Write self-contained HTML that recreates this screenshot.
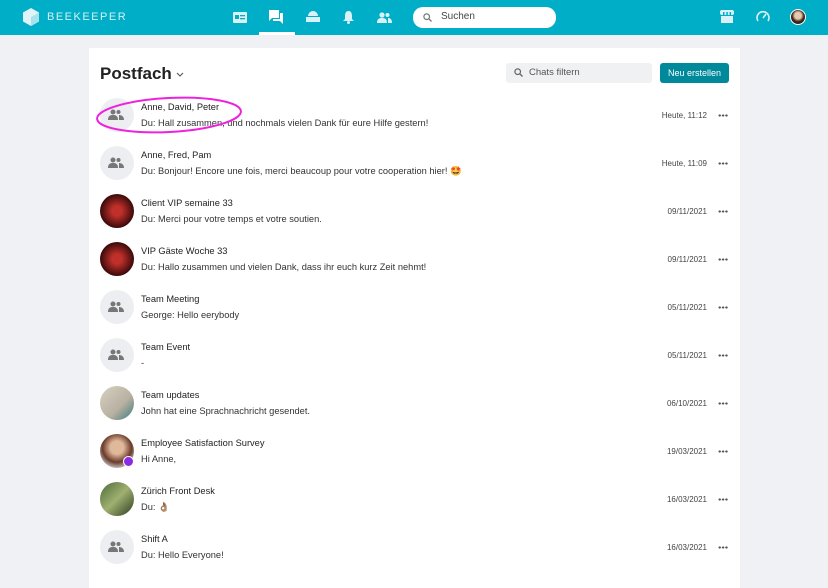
<!DOCTYPE html><html><head><style>
*{margin:0;padding:0;box-sizing:border-box}
body{width:828px;height:571px;overflow:hidden;background:#f0f1f4;font-family:"Liberation Sans",sans-serif;position:relative}
.hdr{position:absolute;left:0;top:0;width:828px;height:35px;background:#00aec7}
.ic{position:absolute;top:10px}
.card{position:absolute;left:89px;top:48px;width:651px;height:540px;background:#fff}
.row{position:absolute;left:0;width:651px;height:48px}
.av{position:absolute;left:11px;top:0;width:34px;height:34px;border-radius:50%;background:#eceef1}
.t{position:absolute;left:52px;top:4px;font-size:9.3px;color:#222}
.s{position:absolute;left:52px;top:20px;font-size:9.3px;color:#333}
.d{position:absolute;right:33px;top:13px;font-size:8px;color:#444}
.m{position:absolute;right:12px;top:16px;width:10px;height:3px;background:radial-gradient(circle,#555 1px,transparent 1.3px) 0 0/3.4px 3px repeat-x}
</style></head><body>
<div class="hdr">
<svg style="position:absolute;left:23px;top:8px" width="16" height="18" viewBox="0 0 16 18"><path d="M8 0L16 4.5V13.5L8 18L0 13.5V4.5Z" fill="#dff4f8"/><path d="M8 9L16 4.5V13.5L8 18Z" fill="#a8e2ec"/></svg>
<div style="position:absolute;left:47px;top:11px;color:#d4f1f6;font-size:11px;letter-spacing:1.5px">BEEKEEPER</div>
<svg class="ic" style="left:233px;top:12px" width="14" height="11"><rect width="14" height="11" rx="1" fill="#d8f2f7"/><rect x="2" y="3" width="4" height="4" fill="#00aec7"/><rect x="7" y="3" width="5" height="1.3" fill="#00aec7"/><rect x="7" y="6" width="5" height="1.3" fill="#00aec7"/></svg>
<svg class="ic" style="left:269px" width="15" height="14"><path d="M0 0H10V8H3L0 11Z" fill="#fff"/><path d="M11 3H14V14L11 11H4V9H11Z" fill="#fff"/></svg>
<div style="position:absolute;left:259px;top:32px;width:36px;height:3px;background:#fff"></div>
<svg class="ic" style="left:306px" width="14" height="13"><path d="M2 6A5 5 0 0 1 12 6Z" fill="#d8f2f7"/><rect x="0" y="7" width="14" height="5" fill="#d8f2f7"/></svg>
<svg class="ic" style="left:343px" width="11" height="14"><path d="M5.5 1C8 1 9 3 9 6V9L11 11H0L2 9V6C2 3 3 1 5.5 1Z" fill="#d8f2f7"/><circle cx="5.5" cy="12.5" r="1.5" fill="#d8f2f7"/></svg>
<svg class="ic" style="left:377px;top:12px" width="15" height="11"><circle cx="5" cy="3" r="2.6" fill="#d8f2f7"/><path d="M0 11C0 7 2 6 5 6S10 7 10 11Z" fill="#d8f2f7"/><circle cx="10.5" cy="3" r="2" fill="#d8f2f7"/><path d="M11 6C13 6 15 7 15 11H11Z" fill="#d8f2f7"/></svg>
<div style="position:absolute;left:413px;top:7px;width:143px;height:21px;background:#fff;border-radius:10px"></div>
<svg style="position:absolute;left:423px;top:13px" width="9" height="9"><circle cx="3.7" cy="3.7" r="2.8" fill="none" stroke="#777" stroke-width="1.2"/><path d="M6 6L8.5 8.5" stroke="#777" stroke-width="1.3"/></svg>
<div style="position:absolute;left:441px;top:11px;font-size:10px;color:#444">Suchen</div>
<svg class="ic" style="left:720px" width="14" height="14"><rect x="0" y="0" width="14" height="5" rx="2" fill="#d8f2f7"/><rect x="1" y="6" width="12" height="7" fill="#d8f2f7"/><rect x="3" y="2" width="1.5" height="3" fill="#00aec7"/><rect x="6.3" y="2" width="1.5" height="3" fill="#00aec7"/><rect x="9.6" y="2" width="1.5" height="3" fill="#00aec7"/></svg>
<svg class="ic" style="left:756px" width="14" height="13"><path d="M2 11A6 6 0 1 1 12 11" fill="none" stroke="#d8f2f7" stroke-width="1.6"/><path d="M7 8L10 4" stroke="#d8f2f7" stroke-width="1.6"/></svg>
<div style="position:absolute;left:790px;top:9px;width:16px;height:16px;border-radius:50%;background:radial-gradient(circle at 50% 40%,#e8c8b0 30%,#3b2418 55%);border:1px solid #fff"></div>
</div>
<div class="card">
<div style="position:absolute;left:11px;top:16px;font-size:17px;font-weight:bold;color:#222">Postfach</div>
<svg style="position:absolute;left:87px;top:24px" width="8" height="5"><path d="M1 1L4 4L7 1" fill="none" stroke="#555" stroke-width="1.1"/></svg>
<div style="position:absolute;left:417px;top:15px;width:146px;height:20px;background:#f0f1f3;border-radius:3px"></div>
<svg style="position:absolute;left:425px;top:20px" width="9" height="9"><circle cx="3.7" cy="3.7" r="2.8" fill="none" stroke="#666" stroke-width="1.2"/><path d="M6 6L8.5 8.5" stroke="#666" stroke-width="1.3"/></svg>
<div style="position:absolute;left:440px;top:19px;font-size:9.5px;color:#555">Chats filtern</div>
<div style="position:absolute;left:571px;top:15px;width:69px;height:20px;background:#00899a;border-radius:3px;color:#fff;font-size:9px;text-align:center;line-height:20px">Neu erstellen</div>
</div>
<div style="position:absolute;left:89px;top:98px">
<div class="row" style="top:0"><div class="av"></div><div class="t">Anne, David, Peter</div><div class="s">Du: Hall zusammen, und nochmals vielen Dank für eure Hilfe gestern!</div><div class="d">Heute, 11:12</div><div class="m"></div></div>
<div class="row" style="top:48px"><div class="av"></div><div class="t">Anne, Fred, Pam</div><div class="s">Du: Bonjour! Encore une fois, merci beaucoup pour votre cooperation hier! 🤩</div><div class="d">Heute, 11:09</div><div class="m"></div></div>
<div class="row" style="top:96px"><div class="av" style="background:radial-gradient(circle,#c0302a 20%,#3a0a0a 70%)"></div><div class="t">Client VIP semaine 33</div><div class="s">Du: Merci pour votre temps et votre soutien.</div><div class="d">09/11/2021</div><div class="m"></div></div>
<div class="row" style="top:144px"><div class="av" style="background:radial-gradient(circle,#c0302a 20%,#3a0a0a 70%)"></div><div class="t">VIP Gäste Woche 33</div><div class="s">Du: Hallo zusammen und vielen Dank, dass ihr euch kurz Zeit nehmt!</div><div class="d">09/11/2021</div><div class="m"></div></div>
<div class="row" style="top:192px"><div class="av"></div><div class="t">Team Meeting</div><div class="s">George: Hello eerybody</div><div class="d">05/11/2021</div><div class="m"></div></div>
<div class="row" style="top:240px"><div class="av"></div><div class="t">Team Event</div><div class="s">-</div><div class="d">05/11/2021</div><div class="m"></div></div>
<div class="row" style="top:288px"><div class="av" style="background:linear-gradient(135deg,#d8d2c4,#b8b0a0 60%,#3a7a80)"></div><div class="t">Team updates</div><div class="s">John hat eine Sprachnachricht gesendet.</div><div class="d">06/10/2021</div><div class="m"></div></div>
<div class="row" style="top:336px"><div class="av" style="background:radial-gradient(circle at 50% 40%,#e0b89a 25%,#6a3a2a 55%,#ccc 80%)"></div><div style="position:absolute;left:34px;top:22px;width:11px;height:11px;border-radius:50%;background:#8a2be2;border:1px solid #fff"></div><div class="t">Employee Satisfaction Survey</div><div class="s">Hi Anne,</div><div class="d">19/03/2021</div><div class="m"></div></div>
<div class="row" style="top:384px"><div class="av" style="background:linear-gradient(135deg,#4a6a3a,#a0b070 50%,#2a3a20)"></div><div class="t">Zürich Front Desk</div><div class="s">Du: 👌🏽</div><div class="d">16/03/2021</div><div class="m"></div></div>
<div class="row" style="top:432px"><div class="av"></div><div class="t">Shift A</div><div class="s">Du: Hello Everyone!</div><div class="d">16/03/2021</div><div class="m"></div></div>
</div>
<svg style="position:absolute;left:0;top:0" width="828" height="571">
<g fill="#777">
<g transform="translate(108,108)"><circle cx="5" cy="4" r="2.5"/><path d="M0 12C0 8 2 7 5 7S10 8 10 12Z"/><circle cx="10.5" cy="4" r="2"/><path d="M11 7C13 7 16 8 16 12H11Z"/></g>
<g transform="translate(108,156)"><circle cx="5" cy="4" r="2.5"/><path d="M0 12C0 8 2 7 5 7S10 8 10 12Z"/><circle cx="10.5" cy="4" r="2"/><path d="M11 7C13 7 16 8 16 12H11Z"/></g>
<g transform="translate(108,300)"><circle cx="5" cy="4" r="2.5"/><path d="M0 12C0 8 2 7 5 7S10 8 10 12Z"/><circle cx="10.5" cy="4" r="2"/><path d="M11 7C13 7 16 8 16 12H11Z"/></g>
<g transform="translate(108,348)"><circle cx="5" cy="4" r="2.5"/><path d="M0 12C0 8 2 7 5 7S10 8 10 12Z"/><circle cx="10.5" cy="4" r="2"/><path d="M11 7C13 7 16 8 16 12H11Z"/></g>
<g transform="translate(108,540)"><circle cx="5" cy="4" r="2.5"/><path d="M0 12C0 8 2 7 5 7S10 8 10 12Z"/><circle cx="10.5" cy="4" r="2"/><path d="M11 7C13 7 16 8 16 12H11Z"/></g>
</g>
<ellipse cx="169" cy="115" rx="72" ry="17" fill="none" stroke="#ee22dd" stroke-width="2" transform="rotate(-3 169 115)"/>
</svg>
</body></html>
